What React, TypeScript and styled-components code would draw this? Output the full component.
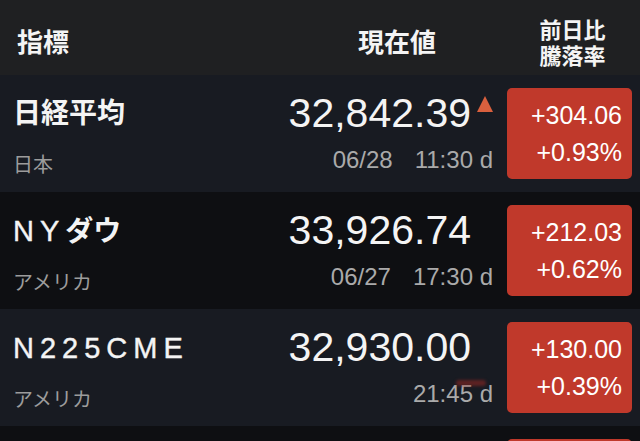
import React from 'react';
import styled, { createGlobalStyle } from 'styled-components';

const GlobalStyle = createGlobalStyle`
  html, body {
    margin: 0;
    padding: 0;
    background: #0e0f12;
    overflow: hidden;
  }
  body {
    font-family: "Liberation Sans", "Noto Sans CJK JP", sans-serif;
    -webkit-font-smoothing: antialiased;
  }
`;

const colors = {
  header: '#1f2022',
  rowLight: '#181b22',
  rowDark: '#0e0f12',
  red: '#c0392b',
  up: '#d9603e',
  text: '#f4f4f4',
  sub: '#9c9c9c',
  date: '#aaaaaa',
};

const Screen = styled.div`
  width: 640px;
  height: 441px;
  overflow: hidden;
  background: ${colors.rowDark};
`;

const Columns = styled.div`
  display: grid;
  grid-template-columns: 1fr 210px 125px;
  column-gap: 14px;
  padding: 0 8px 0 13px;
`;

const Header = styled(Columns)`
  height: 75px;
  align-items: center;
  padding-top: 6px;
  box-sizing: border-box;
  background: ${colors.header};
  color: ${colors.text};
  font-family: "Noto Sans CJK JP", sans-serif;
  font-weight: 700;
`;

const HeadLabel = styled.div<{ $align?: 'left' | 'center' }>`
  font-size: 26px;
  line-height: 34px;
  text-align: ${p => p.$align ?? 'left'};
  padding-left: ${p => (p.$align === 'center' ? '18px' : '4px')};
`;

const HeadStack = styled.div`
  font-size: 22px;
  text-align: center;
  padding-left: 6px;
`;

const HeadLine = styled.div`
  line-height: 26px;
  height: 26px;
`;

const Row = styled(Columns)<{ $light: boolean }>`
  height: 117px;
  background: ${p => (p.$light ? colors.rowLight : colors.rowDark)};
`;

const NameCol = styled.div`
  display: flex;
  flex-direction: column;
  padding-top: 19px;
`;

const Name = styled.div`
  font-family: "Liberation Sans", "Noto Sans CJK JP", sans-serif;
  font-size: 28px;
  line-height: 40px;
  font-weight: 700;
  color: ${colors.text};
  white-space: nowrap;
`;

// the latin letters of a name are set wide, as on the phone
const Wide = styled.span`
  letter-spacing: 6px;
  font-size: 29px;
  -webkit-text-stroke: 0.4px ${colors.text};
  font-weight: 400;
`;

const Sub = styled.div`
  margin-top: 15px;
  font-family: "Noto Sans CJK JP", sans-serif;
  font-size: 20px;
  line-height: 30px;
  color: ${colors.sub};
`;

const ValueCol = styled.div`
  display: flex;
  flex-direction: column;
  align-items: flex-end;
  padding-top: 15px;
`;

const ValueLine = styled.div`
  display: flex;
  justify-content: flex-end;
  align-items: flex-start;
  white-space: nowrap;
`;

const Value = styled.span`
  font-size: 41px;
  line-height: 46px;
  color: ${colors.text};
`;

const Mark = styled.span<{ $up: boolean }>`
  width: 22px;
  display: flex;
  justify-content: flex-end;
  margin-top: 6px;

  &::after {
    content: '';
    display: ${p => (p.$up ? 'block' : 'none')};
    width: 0;
    height: 0;
    border-left: 8.5px solid transparent;
    border-right: 8.5px solid transparent;
    border-bottom: 16px solid ${colors.up};
  }
`;

const DateLine = styled.div`
  margin-top: 9px;
  font-size: 24px;
  line-height: 30px;
  color: ${colors.date};
  white-space: nowrap;
  display: flex;
`;

const Day = styled.span`
  margin-right: 22px;
`;

const Time = styled.span`
  position: relative;
`;

const Smudge = styled.span`
  position: absolute;
  left: 43px;
  top: 1px;
  width: 30px;
  height: 6px;
  border-radius: 4px;
  background: rgba(150, 40, 35, 0.55);
  filter: blur(1.5px);
`;

const ChangeBox = styled.div`
  margin-top: 13px;
  height: 91px;
  border-radius: 5px;
  background: ${colors.red};
  display: flex;
  flex-direction: column;
  justify-content: center;
  align-items: flex-end;
  padding-right: 10px;
  color: #ffffff;
  font-size: 25px;
  line-height: 37px;
`;

type Quote = {
  name: React.ReactNode;
  region: string;
  value: string;
  up: boolean;
  day?: string;
  time: string;
  smudge?: boolean;
  change: string;
  pct: string;
};

const quotes: Quote[] = [
  { name: '日経平均', region: '日本', value: '32,842.39', up: true, day: '06/28', time: '11:30 d', change: '+304.06', pct: '+0.93%' },
  { name: <><Wide>NY</Wide>ダウ</>, region: 'アメリカ', value: '33,926.74', up: false, day: '06/27', time: '17:30 d', change: '+212.03', pct: '+0.62%' },
  { name: <Wide>N225CME</Wide>, region: 'アメリカ', value: '32,930.00', up: false, time: '21:45 d', smudge: true, change: '+130.00', pct: '+0.39%' },
];

export default function App() {
  return (
    <Screen>
      <GlobalStyle />
      <Header>
        <HeadLabel>指標</HeadLabel>
        <HeadLabel $align="center">現在値</HeadLabel>
        <HeadStack>
          <HeadLine>前日比</HeadLine>
          <HeadLine>騰落率</HeadLine>
        </HeadStack>
      </Header>
      {quotes.map((q, i) => (
        <Row key={i} $light={i % 2 === 0}>
          <NameCol>
            <Name>{q.name}</Name>
            <Sub>{q.region}</Sub>
          </NameCol>
          <ValueCol>
            <ValueLine>
              <Value>{q.value}</Value>
              <Mark $up={q.up} />
            </ValueLine>
            <DateLine>
              {q.day && <Day>{q.day}</Day>}
              <Time>
                {q.smudge && <Smudge />}
                {q.time}
              </Time>
            </DateLine>
          </ValueCol>
          <ChangeBox>
            <div>{q.change}</div>
            <div>{q.pct}</div>
          </ChangeBox>
        </Row>
      ))}
      <Row $light={false}>
        <NameCol />
        <ValueCol />
        <ChangeBox />
      </Row>
    </Screen>
  );
}
